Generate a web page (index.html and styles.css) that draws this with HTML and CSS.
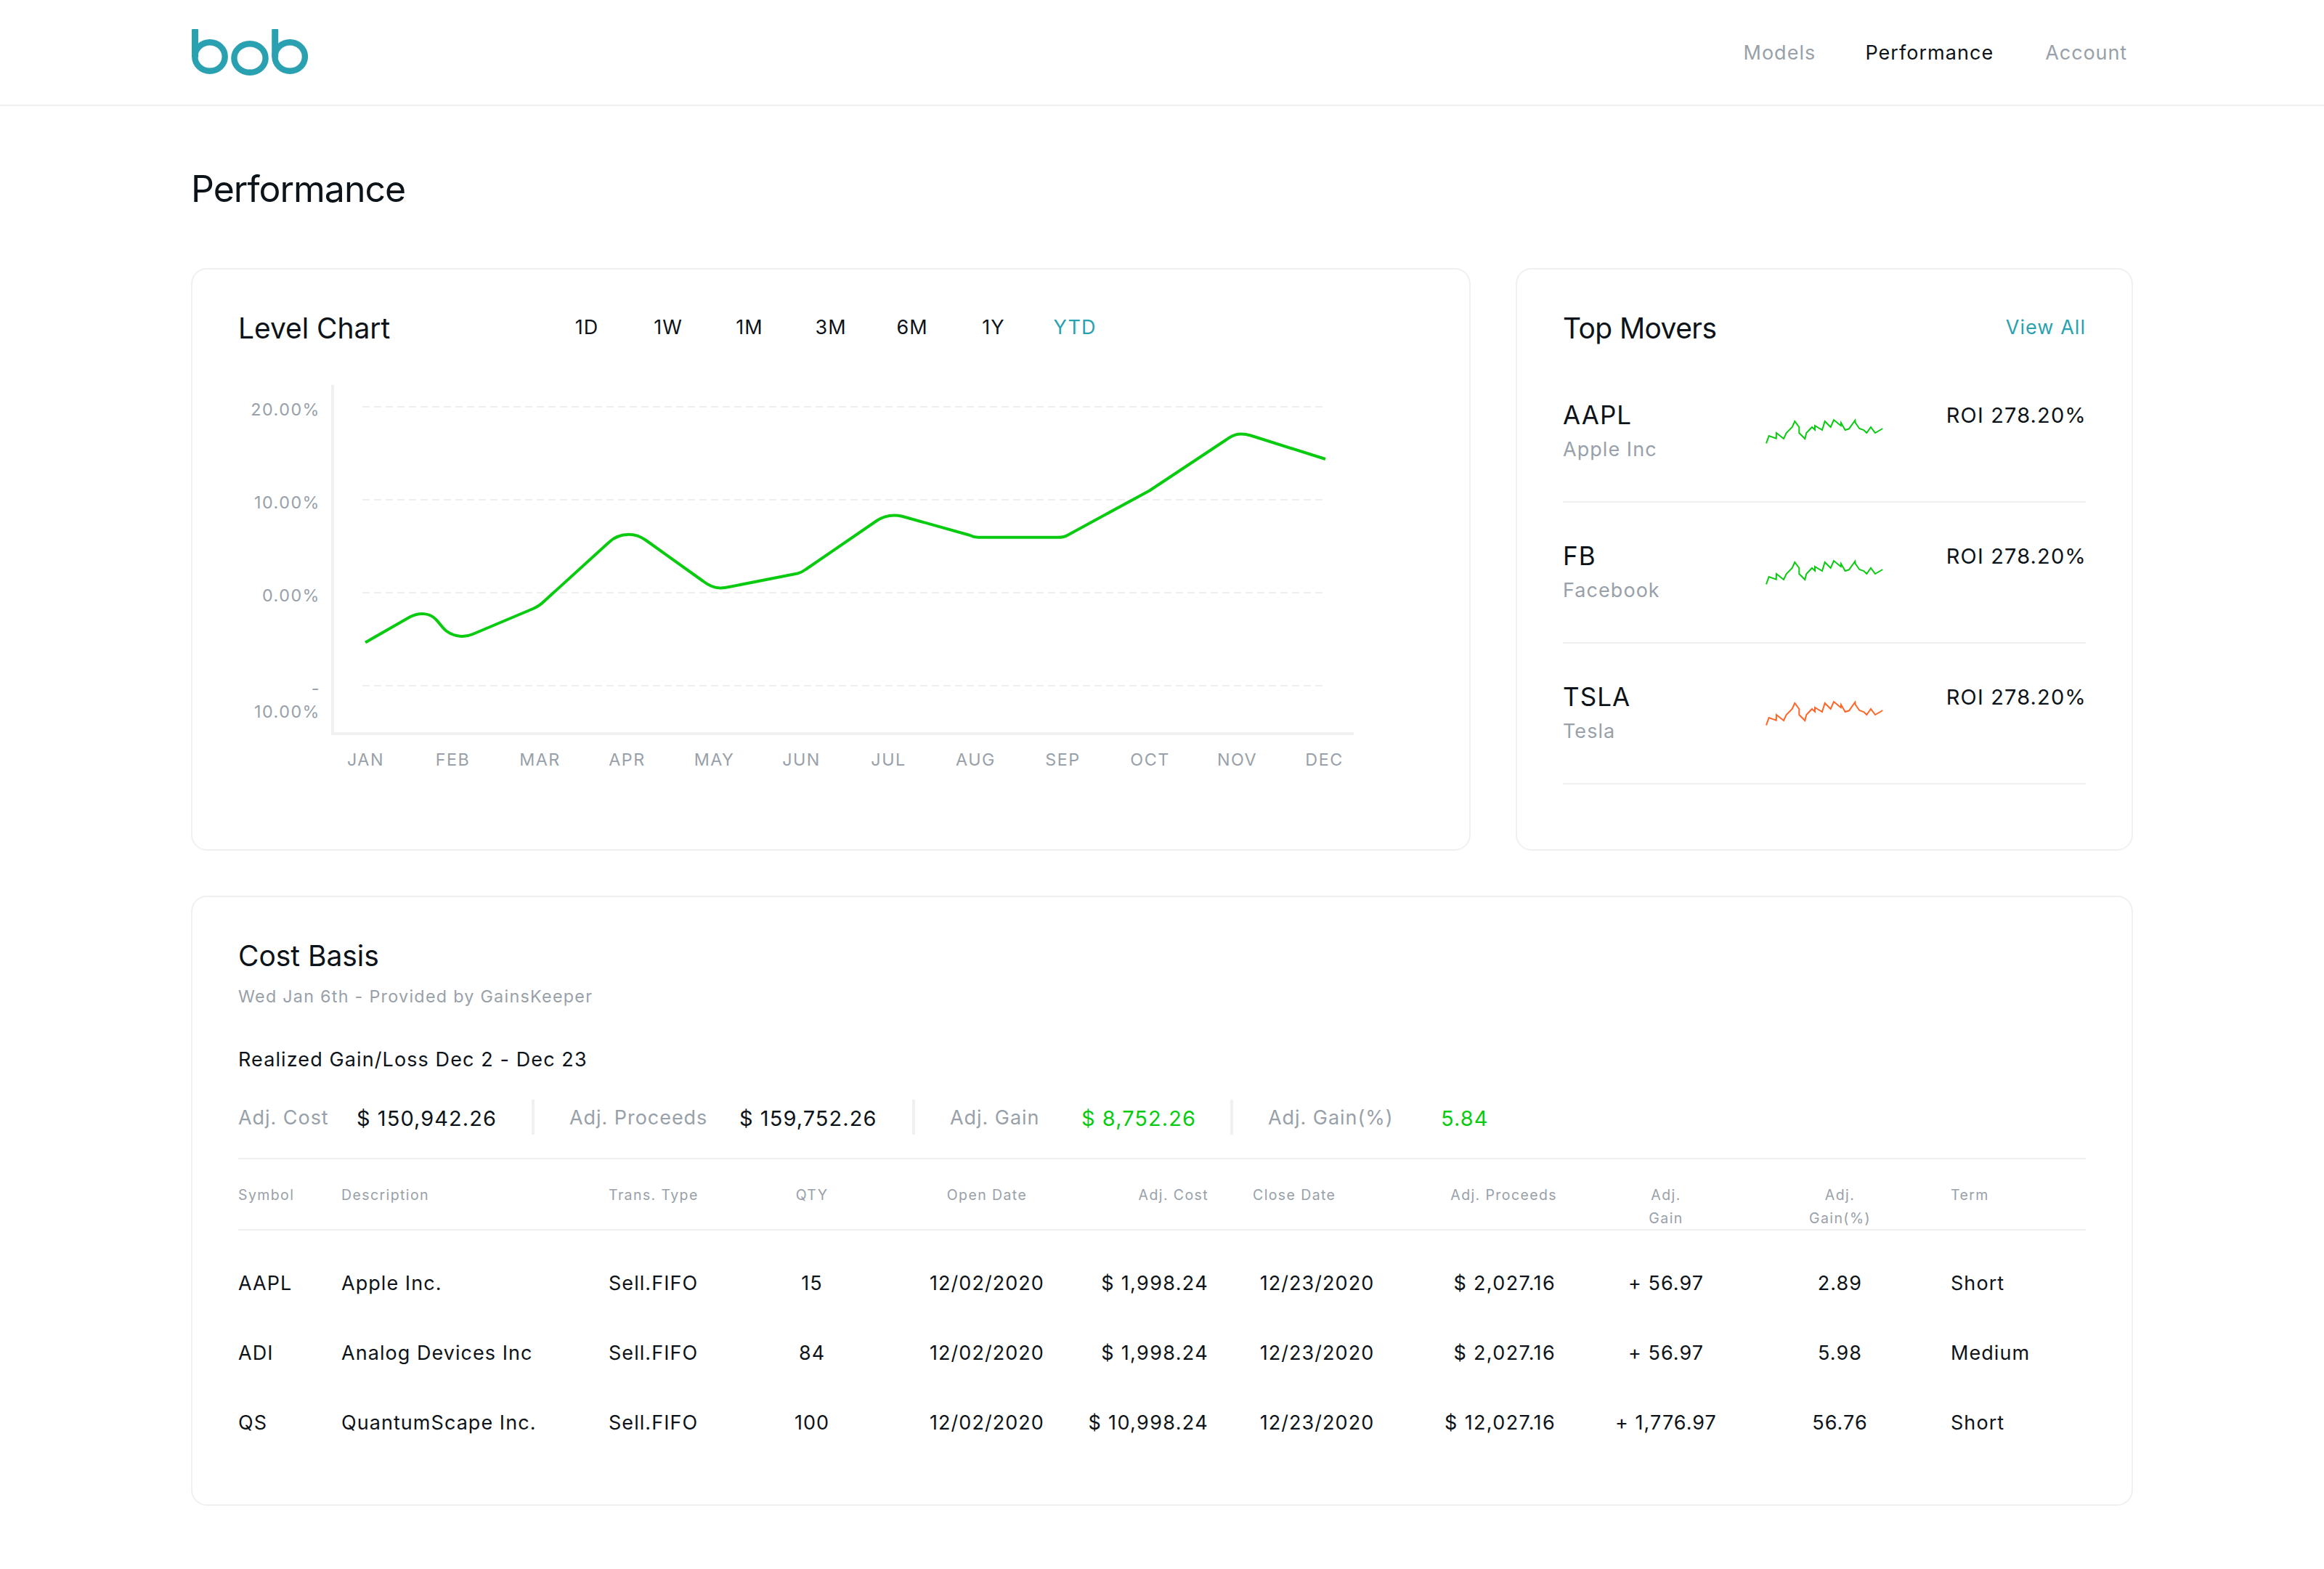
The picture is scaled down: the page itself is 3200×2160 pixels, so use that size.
FILE: index.html
```html
<!DOCTYPE html>
<html lang="en">
<head>
    <meta charset="utf-8">
    <title>bob - Performance</title>
    <link rel="stylesheet" href="styles.css">
</head>
<body>
    <header class="header">
        <a class="logo" href="#" aria-label="bob">
            <svg width="160" height="64" viewBox="0 0 160 64" fill="none" stroke="#2aa1b0" stroke-width="8.4">
                <ellipse cx="25" cy="38" rx="20.7" ry="19.8"/>
                <ellipse cx="80" cy="40" rx="21.6" ry="19.8"/>
                <ellipse cx="135.2" cy="38" rx="20.7" ry="19.8"/>
                <rect class="stem" x="0" y="0" width="9" height="39" rx="1"/>
                <rect class="stem" x="110.2" y="0" width="9" height="39" rx="1"/>
            </svg>
        </a>
        <nav class="nav">
            <a class="nav-link" href="#">Models</a>
            <a class="nav-link active" href="#">Performance</a>
            <a class="nav-link account" href="#">Account</a>
        </nav>
    </header>

    <main class="main">
        <h1 class="page-title">Performance</h1>

        <div class="top-row">
            <section class="card chart-card">
                <div class="card-head">
                    <h2 class="card-title">Level Chart</h2>
                    <div class="tabs">
                        <span class="tab">1D</span>
                        <span class="tab">1W</span>
                        <span class="tab">1M</span>
                        <span class="tab">3M</span>
                        <span class="tab">6M</span>
                        <span class="tab">1Y</span>
                        <span class="tab selected">YTD</span>
                    </div>
                </div>
                <div class="chart">
                    <div class="y-axis">
                        <span>20.00%</span>
                        <span>10.00%</span>
                        <span>0.00%</span>
                        <span>-<br>10.00%</span>
                    </div>
                    <svg class="plot" width="1408" height="482" viewBox="456 530 1408 482" fill="none">
                        <path class="axis" d="M458 530V1010H1864"/>
                        <path class="grid-line" d="M499 560H1821M499 688H1821M499 816H1821M499 944H1821"/>
                        <path class="level-line" d="M503 884.500L565 849C578 842.500 592 844 600 852.500C607 859.500 609 865 616 869.600C626 876.500 640 878 651 873L734 838Q743 834 750 827L838 747C846 739 855 735.700 866 735.700C875 735.700 882 738.500 889 743.500L968 800C977 807 984 809.500 992 809.400Q997 809.500 1004 808L1098 789.500Q1104 788 1110 783.500L1207 717C1219 709 1230 708 1242 710.700L1335 736.700Q1341 739.800 1347 739.800H1457Q1465 739.800 1471 736.200L1582.700 675.500L1689 605C1700 597 1709 595.500 1722 599.500L1825 632"/>
                    </svg>
                </div>
                <div class="months">
                    <span>JAN</span><span>FEB</span><span>MAR</span><span>APR</span>
                    <span>MAY</span><span>JUN</span><span>JUL</span><span>AUG</span>
                    <span>SEP</span><span>OCT</span><span>NOV</span><span>DEC</span>
                </div>
            </section>

            <section class="card movers-card">
                <div class="card-head">
                    <h2 class="card-title tight">Top Movers</h2>
                    <a class="view-all" href="#">View All</a>
                </div>
                <div class="movers">
                    <div class="mover">
                        <div>
                            <div class="ticker">AAPL</div>
                            <div class="company">Apple Inc</div>
                        </div>
                        <svg class="spark" width="166" height="40" viewBox="0 0 166 40">
                            <polyline id="spark-line" points="2,36.3 5.7,26 15.7,29.7 16,22 26,30 29.7,22 37.7,14 41.3,6 47.3,14 47.3,22 55.3,30 57.3,22 65,14 69,17.7 69,12 79,18 82.7,6 90.7,14 95,4 104.7,12 105,8 110.7,18 116,16.3 124.3,4.7 124.7,8 130.3,16 136.3,18 140.3,22 146,14 152,22 162.3,16"/>
                        </svg>
                        <div class="roi">ROI 278.20%</div>
                    </div>
                    <div class="mover">
                        <div>
                            <div class="ticker">FB</div>
                            <div class="company">Facebook</div>
                        </div>
                        <svg class="spark" width="166" height="40" viewBox="0 0 166 40"><use href="#spark-line"/></svg>
                        <div class="roi">ROI 278.20%</div>
                    </div>
                    <div class="mover">
                        <div>
                            <div class="ticker">TSLA</div>
                            <div class="company">Tesla</div>
                        </div>
                        <svg class="spark down" width="166" height="40" viewBox="0 0 166 40"><use href="#spark-line"/></svg>
                        <div class="roi">ROI 278.20%</div>
                    </div>
                </div>
            </section>
        </div>

        <section class="card cost-card">
            <h2 class="card-title">Cost Basis</h2>
            <p class="subtitle">Wed Jan 6th - Provided by GainsKeeper</p>
            <p class="period">Realized Gain/Loss Dec 2 - Dec 23</p>

            <div class="summary">
                <div class="summary-item cost">
                    <span class="summary-label">Adj. Cost</span>
                    <span class="summary-value">$ 150,942.26</span>
                </div>
                <div class="summary-item proceeds">
                    <span class="summary-label">Adj. Proceeds</span>
                    <span class="summary-value">$ 159,752.26</span>
                </div>
                <div class="summary-item gain">
                    <span class="summary-label">Adj. Gain</span>
                    <span class="summary-value positive">$ 8,752.26</span>
                </div>
                <div class="summary-item gain-pct">
                    <span class="summary-label">Adj. Gain(%)</span>
                    <span class="summary-value positive">5.84</span>
                </div>
            </div>

            <div class="table">
                <div class="row table-head">
                    <span>Symbol</span>
                    <span>Description</span>
                    <span>Trans. Type</span>
                    <span class="center">QTY</span>
                    <span class="center">Open Date</span>
                    <span class="right adj-cost">Adj. Cost</span>
                    <span>Close Date</span>
                    <span class="right">Adj. Proceeds</span>
                    <span class="center">Adj.<br>Gain</span>
                    <span class="center">Adj.<br>Gain(%)</span>
                    <span class="term">Term</span>
                </div>
                <div class="row">
                    <span>AAPL</span>
                    <span>Apple Inc.</span>
                    <span>Sell.FIFO</span>
                    <span class="center">15</span>
                    <span class="center">12/02/2020</span>
                    <span class="right amount adj-cost">$ 1,998.24</span>
                    <span class="center">12/23/2020</span>
                    <span class="right amount proceeds-cell">$ 2,027.16</span>
                    <span class="center">+ 56.97</span>
                    <span class="center">2.89</span>
                    <span class="term">Short</span>
                </div>
                <div class="row">
                    <span>ADI</span>
                    <span>Analog Devices Inc</span>
                    <span>Sell.FIFO</span>
                    <span class="center">84</span>
                    <span class="center">12/02/2020</span>
                    <span class="right amount adj-cost">$ 1,998.24</span>
                    <span class="center">12/23/2020</span>
                    <span class="right amount proceeds-cell">$ 2,027.16</span>
                    <span class="center">+ 56.97</span>
                    <span class="center">5.98</span>
                    <span class="term">Medium</span>
                </div>
                <div class="row">
                    <span>QS</span>
                    <span>QuantumScape Inc.</span>
                    <span>Sell.FIFO</span>
                    <span class="center">100</span>
                    <span class="center">12/02/2020</span>
                    <span class="right amount adj-cost">$ 10,998.24</span>
                    <span class="center">12/23/2020</span>
                    <span class="right amount proceeds-cell">$ 12,027.16</span>
                    <span class="center">+ 1,776.97</span>
                    <span class="center">56.76</span>
                    <span class="term">Short</span>
                </div>
            </div>
        </section>
    </main>
</body>
</html>
```

FILE: styles.css
```css
* {
    box-sizing: border-box;
}

body {
    margin: 0;
    background-color: #fff;
    color: #0d1419;
    font-family: Inter, "Liberation Sans", sans-serif;
    font-size: 27px;
    letter-spacing: 1.05px;
}

h1, h2, p {
    margin: 0;
    font-weight: 400;
}

a {
    color: inherit;
    text-decoration: none;
}

svg {
    display: block;
}

/* header */
.header {
    display: flex;
    justify-content: space-between;
    align-items: center;
    height: 146px;
    padding: 0 271px 0 264px;
    border-bottom: 2px solid #f0f0f0;
}

.stem {
    fill: #2aa1b0;
    stroke: none;
}

.nav {
    display: flex;
    gap: 68px;
    padding-top: 2px;
    line-height: 44px;
}

.nav-link {
    color: #98a1a9;
}

.nav-link.active {
    color: #0d1419;
}

.account {
    margin-left: 3px;
    letter-spacing: 0.9px;
}

/* page */
.main {
    padding: 84px 263px 0;
}

.page-title {
    margin-bottom: 79px;
    font-size: 50px;
    line-height: 60px;
    letter-spacing: -1px;
}

.top-row {
    display: grid;
    grid-template-columns: 1762px 850px;
    justify-content: space-between;
    height: 802px;
    margin-bottom: 62px;
}

.card {
    padding: 57px 63px;
    border: 2px solid #f0f0f0;
    border-radius: 22px;
}

.card-head {
    display: flex;
    align-items: flex-start;
    height: 48px;
}

.card-title {
    font-size: 39px;
    line-height: 48px;
    letter-spacing: -0.05px;
}

.card-title.tight {
    letter-spacing: -0.6px;
}

/* level chart */
.chart-card .card-title {
    width: 424px;
}

.tabs {
    display: flex;
    line-height: 46px;
}

.tab {
    width: 112px;
    text-align: center;
}

.selected,
.view-all {
    color: #2aa1b0;
}

.chart {
    display: flex;
    gap: 15px;
    margin-top: 54px;
}

.y-axis,
.months {
    color: #98a1a9;
    font-size: 23.3px;
    line-height: 32px;
    letter-spacing: 1.5px;
}

.y-axis {
    display: grid;
    grid-auto-rows: 128px;
    width: 113px;
    height: 482px;
    padding-top: 18px;
    text-align: right;
}

.axis {
    stroke: #eff0f1;
    stroke-width: 4;
}

.grid-line {
    stroke: #efefef;
    stroke-width: 2;
    stroke-dasharray: 10 6;
}

.level-line {
    stroke: #08cb10;
    stroke-width: 4;
    stroke-linejoin: round;
}

.months {
    display: flex;
    margin: 18px 0 0 115.5px;
}

.months span {
    width: 120px;
    text-align: center;
}

/* top movers */
.movers-card .card-head {
    justify-content: space-between;
}

.view-all {
    line-height: 46px;
}

.movers {
    margin-top: 22px;
}

.mover {
    display: grid;
    grid-template-columns: 278px 1fr auto;
    align-items: start;
    height: 194px;
    padding-top: 51px;
    border-bottom: 2px solid #f0f0f0;
}

.ticker {
    font-size: 35px;
    line-height: 44px;
}

.company {
    margin-top: 6px;
    color: #98a1a9;
    line-height: 40px;
}

.spark {
    margin-top: 25px;
    fill: none;
    stroke: #08cb10;
    stroke-width: 2;
}

.spark.down {
    stroke: #ff6526;
}

.roi {
    margin-right: -1px;
    font-size: 29px;
    line-height: 46px;
    letter-spacing: 1.15px;
}

/* cost basis */
.cost-card {
    height: 840px;
}

.subtitle {
    margin-top: 16px;
    color: #98a1a9;
    font-size: 23.3px;
    line-height: 32px;
    letter-spacing: 1.28px;
}

.period {
    margin-top: 51px;
    line-height: 40px;
    letter-spacing: 1.1px;
}

.summary {
    display: flex;
    height: 48px;
    margin: 35px 0 32px;
    line-height: 50px;
}

.summary-item {
    display: flex;
    padding-left: 48px;
    border-right: 4px solid #f0f0f0;
}

.summary-label {
    color: #98a1a9;
    letter-spacing: 0.95px;
}

.summary-value {
    padding-top: 1px;
    font-size: 29px;
}

.positive {
    color: #08cb10;
}

.cost {
    width: 408px;
    padding-left: 0;
}

.cost .summary-label {
    width: 163px;
}

.proceeds {
    width: 524px;
}

.proceeds .summary-label {
    width: 234px;
}

.gain {
    width: 438px;
}

.gain .summary-label {
    width: 181px;
}

.gain-pct {
    border-right: none;
}

.gain-pct .summary-label {
    width: 238px;
}

.row {
    display: grid;
    grid-template-columns: 142px 368px 154px 252px 230px 251px 177px 242px 300px 179px 249px;
    height: 96px;
    line-height: 98px;
}

.table-head {
    height: 100px;
    margin-bottom: 24px;
    padding-top: 33px;
    border-top: 2px solid #f0f0f0;
    border-bottom: 2px solid #f0f0f0;
    color: #98a1a9;
    font-size: 19.5px;
    line-height: 32px;
    letter-spacing: 1.4px;
}

.center {
    text-align: center;
}

.right {
    text-align: right;
}

.amount {
    letter-spacing: 1.35px;
}

.adj-cost {
    padding-right: 61px;
}

.proceeds-cell {
    padding-right: 2px;
}

.term {
    padding-left: 63px;
}
```
